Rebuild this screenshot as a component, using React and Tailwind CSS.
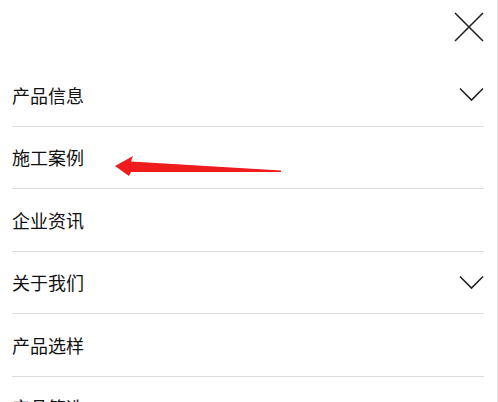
import React from "react";

const items = [
  { label: "产品信息", sub: true },
  { label: "施工案例" },
  { label: "企业资讯" },
  { label: "关于我们", sub: true },
  { label: "产品选样" },
  { label: "产品筛选" },
];

function Chevron() {
  return (
    <svg width="25" height="15" viewBox="0 0 25 15" fill="none">
      <path d="M1 1.5 L12.5 13 L24 1.5" stroke="#222" strokeWidth="1.6" />
    </svg>
  );
}

export default function App() {
  return (
    <div
      className="relative w-[498px] h-[402px] overflow-hidden bg-white border-r border-[#e6e6e6]"
      style={{ fontFamily: '"Noto Sans CJK SC", "Noto Sans", sans-serif' }}
    >
      <div className="h-[64px] flex justify-end items-start pr-[13px] pt-[12px]">
        <svg width="30" height="30" viewBox="0 0 30 30" fill="none">
          <path d="M1 1 L29 29 M29 1 L1 29" stroke="#222" strokeWidth="1.6" />
        </svg>
      </div>
      <ul className="px-[12px] pr-[13px]">
        {items.map((it) => (
          <li
            key={it.label}
            className="h-[62.5px] flex items-center justify-between border-b border-[#dcdcdc] text-[18px] text-[#111]"
          >
            <span className="leading-none">{it.label}</span>
            {it.sub && <Chevron />}
          </li>
        ))}
      </ul>
      <svg
        className="absolute left-0 top-0 pointer-events-none"
        width="498"
        height="402"
        viewBox="0 0 498 402"
      >
        <polygon
          points="115,166 133,156 131,161.5 281,170.5 281,172 131,172 129,176"
          fill="#ee1c1c"
        />
      </svg>
    </div>
  );
}
